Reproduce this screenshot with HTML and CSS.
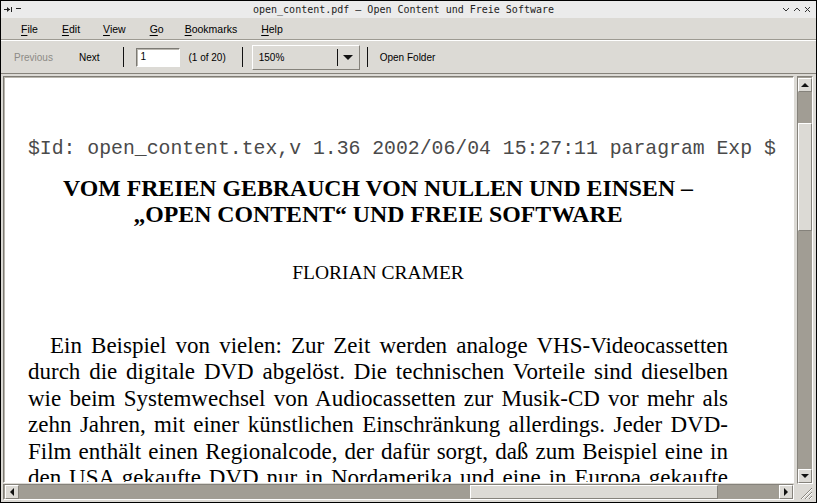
FILE: index.html
```html
<!DOCTYPE html>
<html>
<head>
<meta charset="utf-8">
<link rel="stylesheet" href="styles.css">
</head>
<body>
<div class="window">
  <div class="titlebar">
    <div class="tb-left">
      <svg width="22" height="9" viewBox="0 0 22 9"><path d="M1 4.5 H7" stroke="#222" stroke-width="1"/><path d="M4 2 L7 4.5 L4 7 Z" fill="#222"/><path d="M8.5 2 V7" stroke="#222" stroke-width="1"/><path d="M13 3.5 H18" stroke="#222" stroke-width="1"/></svg>
    </div>
    <div class="tb-title">open_content.pdf — Open Content und Freie Software</div>
    <div class="tb-right">
      <svg width="30" height="9" viewBox="0 0 30 9"><path d="M1 3 L4 6 L7 3" fill="none" stroke="#333" stroke-width="1"/><path d="M12 6 L15 3 L18 6" fill="none" stroke="#333" stroke-width="1"/><path d="M23 2 L28 7 M28 2 L23 7" fill="none" stroke="#333" stroke-width="1"/></svg>
    </div>
  </div>
  <div class="menubar">
    <span class="mi"><u>F</u>ile</span>
    <span class="mi"><u>E</u>dit</span>
    <span class="mi"><u>V</u>iew</span>
    <span class="mi"><u>G</u>o</span>
    <span class="mi"><u>B</u>ookmarks</span>
    <span class="mi"><u>H</u>elp</span>
  </div>
  <div class="toolbar">
    <span class="tbtn disabled">Previous</span>
    <span class="tbtn next">Next</span>
    <span class="sep s1"></span>
    <span class="pageinput">1</span>
    <span class="pagecount">(1 of 20)</span>
    <span class="sep s2"></span>
    <span class="combo"><span class="combo-text">150%</span><span class="combo-btn"><span class="tri-down"></span></span></span>
    <span class="sep s3"></span>
    <span class="tbtn">Open Folder</span>
  </div>
  <div class="viewer">
    <div class="doc">
      <div class="page">
        <div class="rcsid">$Id: open_content.tex,v 1.36 2002/06/04 15:27:11 paragram Exp $</div>
        <h1 class="title">VOM FREIEN GEBRAUCH VON NULLEN UND EINSEN –<br>„OPEN CONTENT“ UND FREIE SOFTWARE</h1>
        <div class="author">FLORIAN CRAMER</div>
        <div class="body">
          <div class="ln first">Ein Beispiel von vielen: Zur Zeit werden analoge VHS-Videocassetten</div>
          <div class="ln">durch die digitale DVD abgelöst. Die technischen Vorteile sind dieselben</div>
          <div class="ln">wie beim Systemwechsel von Audiocassetten zur Musik-CD vor mehr als</div>
          <div class="ln">zehn Jahren, mit einer künstlichen Einschränkung allerdings. Jeder DVD-</div>
          <div class="ln">Film enthält einen Regionalcode, der dafür sorgt, daß zum Beispiel eine in</div>
          <div class="ln">den USA gekaufte DVD nur in Nordamerika und eine in Europa gekaufte</div>
        </div>
      </div>
    </div>
    <div class="vscroll">
      <span class="sbtn"><span class="tri-up"></span></span>
      <span class="vtrack-a"></span>
      <span class="vthumb"></span>
      <span class="vtrack-b"></span>
      <span class="sbtn"><span class="tri-down small"></span></span>
    </div>
    <div class="hscroll">
      <span class="sbtn"><span class="tri-left"></span></span>
      <span class="htrack-a"></span>
      <span class="hthumb"></span>
      <span class="htrack-b"></span>
      <span class="sbtn"><span class="tri-right"></span></span>
    </div>
    <div class="grip">
      <svg width="16" height="16" viewBox="0 0 16 16"><path d="M15 4 L4 15 M15 8 L8 15 M15 12 L12 15" stroke="#8a877f" stroke-width="1"/><path d="M15 5 L5 15 M15 9 L9 15 M15 13 L13 15" stroke="#fff" stroke-width="1"/></svg>
    </div>
  </div>
</div>
</body>
</html>
```

FILE: styles.css
```css
* { box-sizing: border-box; }
html, body { margin: 0; padding: 0; }
body { width: 817px; height: 503px; overflow: hidden; background: #000; }

.window {
  width: 817px; height: 503px;
  border: 1px solid #000;
  display: flex; flex-direction: column;
  background: #dcdad5;
  font-family: "Liberation Sans", Arial, sans-serif;
  color: #000;
}

.titlebar {
  height: 17px; flex: none;
  background: #ebebeb;
  display: flex; align-items: center;
  font-family: "DejaVu Sans Mono", monospace;
  font-size: 10px;
  color: #222;
  padding: 0 4px 0 2px;
}
.tb-left { width: 60px; display: flex; align-items: center; }
.tb-title { flex: 1; text-align: center; padding-right: 8px; }
.tb-right { width: 60px; display: flex; justify-content: flex-end; }

.menubar {
  height: 22px; flex: none;
  display: flex; align-items: center;
  padding-left: 20px;
  font-size: 10.5px;
  border-bottom: 1px solid #9d9a92;
  box-shadow: 0 1px 0 #fff;
  margin-bottom: 1px;
}
.menubar .mi:nth-child(1) { margin-right: 24px; }
.menubar .mi:nth-child(2) { margin-right: 23px; }
.menubar .mi:nth-child(3) { margin-right: 24px; }
.menubar .mi:nth-child(4) { margin-right: 21px; }
.menubar .mi:nth-child(5) { margin-right: 24px; }
.menubar u { text-decoration: underline; text-underline-offset: 2px; }

.toolbar {
  height: 33px; flex: none;
  display: flex; align-items: center;
  padding-left: 13px;
  font-size: 10px;
  border-bottom: 1px solid #85827b;
}
.tbtn { margin-right: 26px; }
.tbtn.disabled { color: #8d8b86; }
.tbtn.next { margin-right: 24px; }
.sep { width: 1px; height: 20px; background: #111; }
.sep.s1 { margin-right: 12px; }
.sep.s2 { margin-right: 9px; }
.sep.s3 { margin-right: 12px; }
.pageinput {
  width: 44px; height: 19px;
  background: #fff;
  border: 1px solid #fff;
  border-top-color: #7c7a74; border-left-color: #7c7a74;
  box-shadow: inset 1px 1px 0 #bab7b0;
  padding: 2px 0 0 3px;
  margin-right: 8px;
  font-size: 10px;
}
.pagecount { margin-right: 16px; }
.combo {
  width: 108px; height: 25px;
  display: flex; align-items: center;
  border: 1px solid #85827b;
  border-top-color: #fff; border-left-color: #fff;
  margin-right: 7px;
}
.combo-text { flex: 1; padding-left: 6px; }
.combo-btn {
  width: 22px; height: 17px;
  border-left: 1px solid #111;
  display: flex; align-items: center; justify-content: center;
}
.tri-down { width: 0; height: 0; border-left: 5px solid transparent; border-right: 5px solid transparent; border-top: 5px solid #111; }
.tri-down.small { border-left-width: 4px; border-right-width: 4px; border-top-width: 4px; }
.tri-up { width: 0; height: 0; border-left: 4px solid transparent; border-right: 4px solid transparent; border-bottom: 4px solid #111; }
.tri-left { width: 0; height: 0; border-top: 4px solid transparent; border-bottom: 4px solid transparent; border-right: 4px solid #111; }
.tri-right { width: 0; height: 0; border-top: 4px solid transparent; border-bottom: 4px solid transparent; border-left: 4px solid #111; }

.viewer {
  flex: 1; min-height: 0;
  display: grid;
  grid-template-columns: 1fr 16px;
  grid-template-rows: 1fr 16px;
  padding: 2px 3px 2px 2px;
  background: #dcdad5;
}
.doc {
  overflow: hidden;
  background: #fff;
  border: 1px solid #7f7c75;
  border-right-color: #fff; border-bottom-color: #fff;
  box-shadow: inset 1px 1px 0 #b9b6ae;
  margin-right: 3px;
  margin-bottom: 1px;
}
.page {
  padding: 0 0 0 24px;
  width: 790px;
  color: #000;
}
.rcsid {
  font-family: "Liberation Mono", "Courier New", monospace;
  font-size: 19.8px;
  color: #4a4a4a;
  margin-top: 60px;
  line-height: 24px;
  white-space: nowrap;
}
.title {
  font-family: "Liberation Serif", "Times New Roman", serif;
  font-weight: bold;
  font-size: 23.8px;
  line-height: 26px;
  text-align: center;
  width: 700px;
  margin: 14px 0 0 0;
}
.author {
  font-family: "Liberation Serif", "Times New Roman", serif;
  font-size: 19.5px;
  text-align: center;
  width: 700px;
  margin-top: 35px;
  line-height: 22px;
}
.body {
  font-family: "Liberation Serif", "Times New Roman", serif;
  font-size: 23px;
  line-height: 26.4px;
  width: 700px;
  margin-top: 49px;
}
.ln { text-align: justify; text-align-last: justify; white-space: nowrap; }
.ln.first { text-indent: 22px; }

.vscroll {
  grid-column: 2; grid-row: 1;
  display: flex; flex-direction: column;
  background: #a19d94;
  border: 1px solid #85827b;
  border-right-color: #fff; border-bottom-color: #fff;
}
.sbtn {
  flex: none;
  width: 14px; height: 14px;
  background: #dcdad5;
  border: 1px solid #85827b;
  border-top-color: #fff; border-left-color: #fff;
  display: flex; align-items: center; justify-content: center;
  margin: 1px 0 0 0;
}
.vtrack-a { height: 31px; flex: none; }
.vthumb {
  flex: none; height: 108px; width: 14px;
  background: #dcdad5;
  border: 1px solid #85827b;
  border-top-color: #fff; border-left-color: #fff;
}
.vtrack-b { flex: 1; }
.hscroll {
  grid-column: 1; grid-row: 2;
  display: flex;
  background: #a19d94;
  border: 1px solid #85827b;
  border-right-color: #fff; border-bottom-color: #fff;
  margin-right: 3px;
}
.hscroll .sbtn { margin: 0 0 0 1px; }
.htrack-a { width: 451px; flex: none; }
.hthumb {
  flex: none; width: 248px; height: 14px;
  background: #dcdad5;
  border: 1px solid #85827b;
  border-top-color: #fff; border-left-color: #fff;
}
.htrack-b { flex: 1; }
.grip { grid-column: 2; grid-row: 2; }
```
